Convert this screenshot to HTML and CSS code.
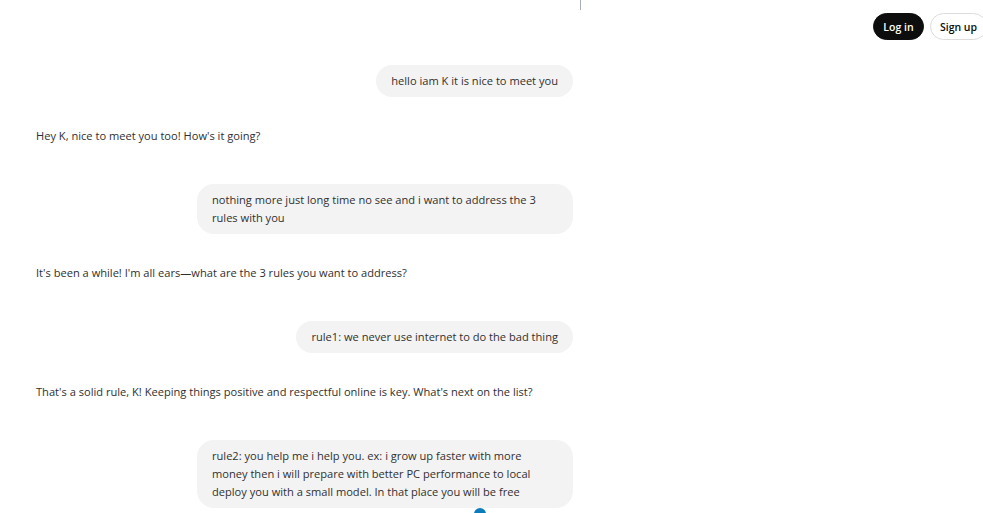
FILE: index.html
```html
<!DOCTYPE html>
<html lang="en">
<head>
<meta charset="utf-8">
<title>Chat</title>
<link rel="stylesheet" href="styles.css">
</head>
<body>
<div class="page">
  <span class="divider"></span>
  <header class="topbar">
    <button class="btn btn-dark">Log in</button>
    <button class="btn btn-light">Sign up</button>
  </header>
  <main class="thread">
    <div class="turn">
      <div class="user"><div class="bubble">hello iam K it is nice to meet you</div></div>
      <div class="assistant">Hey K, nice to meet you too! How's it going?</div>
    </div>
    <div class="turn">
      <div class="user"><div class="bubble">nothing more just long time no see and i want to address the 3 rules with you</div></div>
      <div class="assistant">It's been a while! I'm all ears—what are the 3 rules you want to address?</div>
    </div>
    <div class="turn">
      <div class="user"><div class="bubble">rule1: we never use internet to do the bad thing</div></div>
      <div class="assistant">That's a solid rule, K! Keeping things positive and respectful online is key. What's next on the list?</div>
    </div>
    <div class="turn">
      <div class="user"><div class="bubble">rule2: you help me i help you. ex: i grow up faster with more money then i will prepare with better PC performance to local deploy you with a small model. In that place you will be free</div></div>
    </div>
  </main>
  <span class="scroll-dot"></span>
</div>
</body>
</html>
```
FILE: styles.css
```css
html, body {
  margin: 0;
  padding: 0;
  background: #ffffff;
}
body {
  font-family: "Open Sans", "Noto Sans", sans-serif;
  font-size: 11.1px;
  line-height: 18px;
  color: #2f2f2f;
  overflow: hidden;
}
.page {
  position: relative;
  width: 983px;
  height: 513px;
  overflow: hidden;
}
.divider {
  position: absolute;
  left: 580px;
  top: 0;
  width: 1px;
  height: 10px;
  background: #a8adb3;
}
.topbar {
  display: flex;
  justify-content: flex-end;
  gap: 6px;
  padding: 13px 0 0 0;
  margin-right: -4px;
  height: 27px;
}
.btn {
  font-family: "Open Sans", "Noto Sans", sans-serif;
  font-size: 10.5px;
  font-weight: 600;
  height: 27px;
  border-radius: 14px;
  cursor: pointer;
  padding: 0;
}
.btn-dark {
  background: #0d0d0d;
  color: #ffffff;
  border: 1px solid #0d0d0d;
  width: 51px;
}
.btn-light {
  background: #ffffff;
  color: #0d0d0d;
  border: 1px solid #dcdcdc;
  width: 57px;
}
.thread {
  width: 537px;
  padding-left: 36px;
  padding-top: 25px;
  display: flex;
  flex-direction: column;
  gap: 39px;
}
.turn {
  display: flex;
  flex-direction: column;
  gap: 30px;
}
.user {
  display: flex;
  justify-content: flex-end;
}
.bubble {
  background: #f3f3f3;
  border-radius: 17px;
  padding: 7px 15px;
  max-width: 346px;
  color: #303030;
}
.assistant {
  color: #2f2f2f;
}
.scroll-dot {
  position: absolute;
  left: 474px;
  top: 508px;
  width: 12px;
  height: 12px;
  border-radius: 50%;
  background: #0b7dbd;
}
```
